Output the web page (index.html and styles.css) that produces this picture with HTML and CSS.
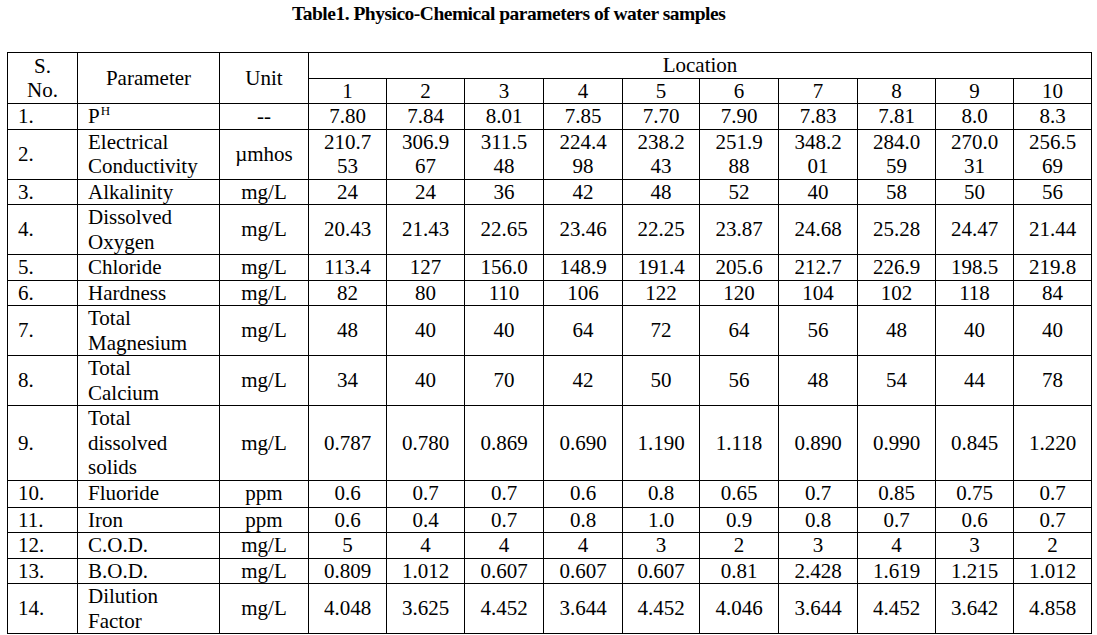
FILE: index.html
```html
<!DOCTYPE html>
<html>
<head>
<meta charset="utf-8">
<link rel="stylesheet" href="styles.css">
</head>
<body>
<div class="page">
  <h1 class="title">Table1. Physico-Chemical parameters of water samples</h1>
  <table class="data">
    <colgroup>
      <col class="c-sno"><col class="c-param"><col class="c-unit">
      <col class="c-78"><col class="c-78"><col class="c-79"><col class="c-79"><col class="c-77">
      <col class="c-79"><col class="c-79"><col class="c-78"><col class="c-78"><col class="c-78">
    </colgroup>
    <thead>
      <tr class="hrow">
        <th rowspan="2" class="mid">S.<br>No.</th>
        <th rowspan="2" class="mid">Parameter</th>
        <th rowspan="2" class="mid">Unit</th>
        <th colspan="10" class="mid">Location</th>
      </tr>
      <tr class="hrow">
        <th>1</th><th>2</th><th>3</th><th>4</th><th>5</th><th>6</th><th>7</th><th>8</th><th>9</th><th>10</th>
      </tr>
    </thead>
    <tbody>
      <tr><td class="sn">1.</td><td class="pm">P<span class="sup">H</span></td><td>--</td><td>7.80</td><td>7.84</td><td>8.01</td><td>7.85</td><td>7.70</td><td>7.90</td><td>7.83</td><td>7.81</td><td>8.0</td><td>8.3</td></tr>
      <tr><td class="sn">2.</td><td class="pm">Electrical<br>Conductivity</td><td>µmhos</td><td>210.7<br>53</td><td>306.9<br>67</td><td>311.5<br>48</td><td>224.4<br>98</td><td>238.2<br>43</td><td>251.9<br>88</td><td>348.2<br>01</td><td>284.0<br>59</td><td>270.0<br>31</td><td>256.5<br>69</td></tr>
      <tr><td class="sn">3.</td><td class="pm">Alkalinity</td><td>mg/L</td><td>24</td><td>24</td><td>36</td><td>42</td><td>48</td><td>52</td><td>40</td><td>58</td><td>50</td><td>56</td></tr>
      <tr><td class="sn">4.</td><td class="pm">Dissolved<br>Oxygen</td><td>mg/L</td><td>20.43</td><td>21.43</td><td>22.65</td><td>23.46</td><td>22.25</td><td>23.87</td><td>24.68</td><td>25.28</td><td>24.47</td><td>21.44</td></tr>
      <tr><td class="sn">5.</td><td class="pm">Chloride</td><td>mg/L</td><td>113.4</td><td>127</td><td>156.0</td><td>148.9</td><td>191.4</td><td>205.6</td><td>212.7</td><td>226.9</td><td>198.5</td><td>219.8</td></tr>
      <tr><td class="sn">6.</td><td class="pm">Hardness</td><td>mg/L</td><td>82</td><td>80</td><td>110</td><td>106</td><td>122</td><td>120</td><td>104</td><td>102</td><td>118</td><td>84</td></tr>
      <tr><td class="sn">7.</td><td class="pm">Total<br>Magnesium</td><td>mg/L</td><td>48</td><td>40</td><td>40</td><td>64</td><td>72</td><td>64</td><td>56</td><td>48</td><td>40</td><td>40</td></tr>
      <tr><td class="sn">8.</td><td class="pm">Total<br>Calcium</td><td>mg/L</td><td>34</td><td>40</td><td>70</td><td>42</td><td>50</td><td>56</td><td>48</td><td>54</td><td>44</td><td>78</td></tr>
      <tr><td class="sn">9.</td><td class="pm">Total<br>dissolved<br>solids</td><td>mg/L</td><td>0.787</td><td>0.780</td><td>0.869</td><td>0.690</td><td>1.190</td><td>1.118</td><td>0.890</td><td>0.990</td><td>0.845</td><td>1.220</td></tr>
      <tr class="r10"><td class="sn">10.</td><td class="pm">Fluoride</td><td>ppm</td><td>0.6</td><td>0.7</td><td>0.7</td><td>0.6</td><td>0.8</td><td>0.65</td><td>0.7</td><td>0.85</td><td>0.75</td><td>0.7</td></tr>
      <tr><td class="sn">11.</td><td class="pm">Iron</td><td>ppm</td><td>0.6</td><td>0.4</td><td>0.7</td><td>0.8</td><td>1.0</td><td>0.9</td><td>0.8</td><td>0.7</td><td>0.6</td><td>0.7</td></tr>
      <tr><td class="sn">12.</td><td class="pm">C.O.D.</td><td>mg/L</td><td>5</td><td>4</td><td>4</td><td>4</td><td>3</td><td>2</td><td>3</td><td>4</td><td>3</td><td>2</td></tr>
      <tr><td class="sn">13.</td><td class="pm">B.O.D.</td><td>mg/L</td><td>0.809</td><td>1.012</td><td>0.607</td><td>0.607</td><td>0.607</td><td>0.81</td><td>2.428</td><td>1.619</td><td>1.215</td><td>1.012</td></tr>
      <tr><td class="sn">14.</td><td class="pm">Dilution<br>Factor</td><td>mg/L</td><td>4.048</td><td>3.625</td><td>4.452</td><td>3.644</td><td>4.452</td><td>4.046</td><td>3.644</td><td>4.452</td><td>3.642</td><td>4.858</td></tr>
    </tbody>
  </table>
</div>
</body>
</html>
```

FILE: styles.css
```css
html, body {
  margin: 0;
  padding: 0;
  background: #ffffff;
}

.page {
  padding: 2px 0 0 7px;
  font-family: "Liberation Serif", "Times New Roman", serif;
  color: #000000;
}

.title {
  margin: 0 0 26px 0;
  padding-left: 285px;
  font-size: 19.5px;
  letter-spacing: -0.5px;
  line-height: 24px;
  font-weight: bold;
  text-align: left;
}

.data {
  border-collapse: collapse;
  table-layout: fixed;
  width: 1085px;
  font-size: 21px;
  line-height: 24.5px;
}

.c-sno { width: 70px; }
.c-param { width: 142px; }
.c-unit { width: 89px; }
.c-77 { width: 77px; }
.c-78 { width: 78px; }
.c-79 { width: 79px; }

.data th,
.data td {
  border: 1px solid #000000;
  padding: 0;
  text-align: center;
  vertical-align: middle;
  font-weight: normal;
  white-space: nowrap;
}

.hrow th {
  height: 24.5px;
}

.data td.sn,
.data td.pm {
  text-align: left;
  padding-left: 10px;
}

.r10 td {
  height: 26px;
}

.sup {
  font-size: 13px;
  line-height: 0;
  position: relative;
  top: -8px;
  margin-left: 1px;
}
```
